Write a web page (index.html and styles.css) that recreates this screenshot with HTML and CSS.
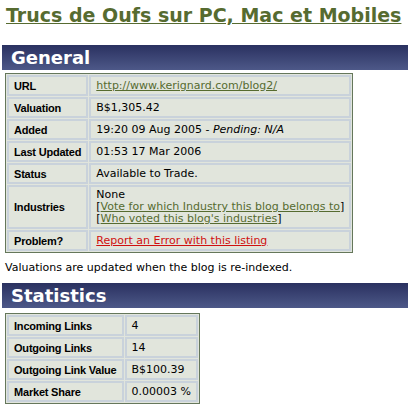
FILE: index.html
```html
<!DOCTYPE html>
<html lang="fr">

<head>
  <meta charset="UTF-8" />
  <title>Trucs de Oufs sur PC, Mac et Mobiles</title>
  <link rel="stylesheet" href="styles.css">
</head>

<body>
  <h1 class="titre"><a href="#">Trucs de Oufs sur PC, Mac et Mobiles</a></h1>

  <h2 class="bar">General</h2>
  <table class="info general">
    <tr>
      <th>URL</th>
      <td><a href="#">http://www.kerignard.com/blog2/</a></td>
    </tr>
    <tr>
      <th>Valuation</th>
      <td>B$1,305.42</td>
    </tr>
    <tr>
      <th>Added</th>
      <td>19:20 09 Aug 2005 - <em>Pending: N/A</em></td>
    </tr>
    <tr>
      <th>Last Updated</th>
      <td>01:53 17 Mar 2006</td>
    </tr>
    <tr>
      <th>Status</th>
      <td>Available to Trade.</td>
    </tr>
    <tr class="tall">
      <th>Industries</th>
      <td>None<br>[<a href="#">Vote for which Industry this blog belongs to</a>]<br>[<a href="#">Who voted this blog's industries</a>]</td>
    </tr>
    <tr>
      <th>Problem?</th>
      <td><a class="err" href="#">Report an Error with this listing</a></td>
    </tr>
  </table>
  <p class="note">Valuations are updated when the blog is re-indexed.</p>

  <h2 class="bar">Statistics</h2>
  <table class="info stats">
    <tr>
      <th>Incoming Links</th>
      <td>4</td>
    </tr>
    <tr>
      <th>Outgoing Links</th>
      <td>14</td>
    </tr>
    <tr>
      <th>Outgoing Link Value</th>
      <td>B$100.39</td>
    </tr>
    <tr>
      <th>Market Share</th>
      <td>0.00003 %</td>
    </tr>
  </table>
</body>

</html>
```
FILE: styles.css
```css
body {
  margin: 0;
  font-family: "DejaVu Sans", Verdana, sans-serif;
  font-size: 11px;
  color: #000;
}

.titre {
  margin: 3px 0 18px 6px;
  font-size: 19px;
  line-height: 24px;
  white-space: nowrap;
}

.titre a {
  color: #566b30;
}

.bar {
  margin: 9px 0 3px 2px;
  padding: 0 0 0 9px;
  height: 25px;
  line-height: 25px;
  font-size: 18px;
  color: #fff;
  background: linear-gradient(#2a3160, #4d5888);
}

.titre + .bar {
  margin-top: 0;
}

.info {
  margin-left: 5px;
  border: 1px solid #65775b;
  border-spacing: 1px;
  background-color: #e1e5dc;
}

.info th,
.info td {
  border: 2px solid #c9d2db;
  padding: 2px 5px;
  height: 13px;
  text-align: left;
  white-space: nowrap;
}

.info th {
  font-family: "Liberation Sans", Tahoma, sans-serif;
  font-size: 11px;
  font-weight: bold;
  letter-spacing: -0.2px;
}

.general {
  width: 348px;
}

.general th {
  width: 58px;
}

.tall td {
  line-height: 12px;
  padding: 2px 5px;
}

.info a {
  color: #566b30;
}

.info a.err {
  color: #d01010;
}

.note {
  margin: 8px 0 0 5px;
}

.stats {
  margin-top: 5px;
}

.stats th {
  width: 86px;
}

.stats td {
  width: 50px;
}
```
